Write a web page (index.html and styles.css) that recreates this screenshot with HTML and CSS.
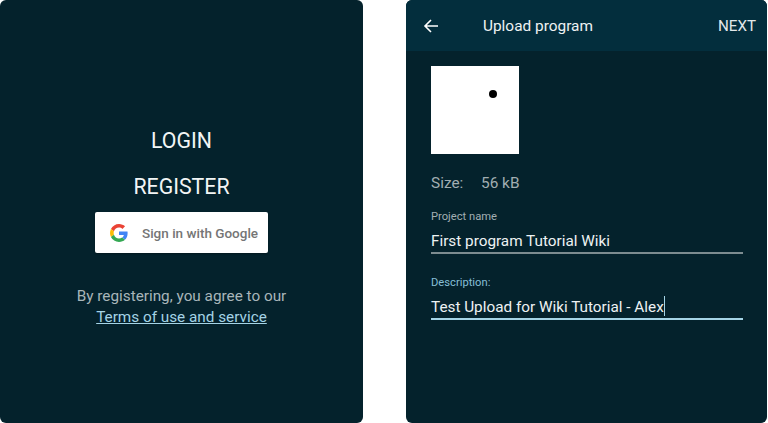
FILE: index.html
```html
<!DOCTYPE html>
<html lang="en">
<head>
  <meta charset="UTF-8">
  <meta name="viewport" content="width=device-width, initial-scale=1.0">
  <title>Upload program</title>
  <link rel="stylesheet" href="styles.css">
</head>
<body>
  <div class="screen login">
    <div class="login-link first">LOGIN</div>
    <div class="login-link">REGISTER</div>
    <div class="google-btn">
      <svg class="google-icon" viewBox="0 0 48 48" width="18" height="18">
        <path fill="#EA4335" d="M24 9.5c3.54 0 6.71 1.22 9.21 3.6l6.85-6.85C35.9 2.38 30.47 0 24 0 14.62 0 6.51 5.38 2.56 13.22l7.98 6.19C12.43 13.72 17.74 9.5 24 9.5z"/>
        <path fill="#4285F4" d="M46.98 24.55c0-1.57-.15-3.09-.38-4.55H24v9.02h12.94c-.58 2.96-2.26 5.48-4.78 7.18l7.73 6c4.51-4.18 7.09-10.36 7.09-17.65z"/>
        <path fill="#FBBC05" d="M10.53 28.59c-.48-1.45-.76-2.99-.76-4.59s.27-3.14.76-4.59l-7.98-6.19C.92 16.46 0 20.12 0 24c0 3.88.92 7.54 2.56 10.78l7.97-6.19z"/>
        <path fill="#34A853" d="M24 48c6.48 0 11.93-2.13 15.89-5.81l-7.73-6c-2.15 1.45-4.92 2.3-8.16 2.3-6.26 0-11.57-4.22-13.47-9.91l-7.98 6.19C6.51 42.62 14.62 48 24 48z"/>
      </svg>
      <span class="google-text">Sign in with Google</span>
    </div>
    <div class="terms">
      <div>By registering, you agree to our</div>
      <div class="terms-link">Terms of use and service</div>
    </div>
  </div>

  <div class="screen upload">
    <div class="topbar">
      <svg class="back" viewBox="0 0 16 16" width="16" height="16">
        <path d="M15 8H2M8 2L2 8l6 6" fill="none" stroke="#fff" stroke-width="1.6"/>
      </svg>
      <div class="topbar-title">Upload program</div>
      <div class="topbar-next">NEXT</div>
    </div>
    <div class="content">
      <div class="thumb"><span class="thumb-dot"></span></div>
      <div class="size"><span class="size-label">Size:</span><span>56 kB</span></div>
      <div class="field">
        <div class="field-label">Project name</div>
        <div class="field-value">First program Tutorial Wiki</div>
      </div>
      <div class="field focused">
        <div class="field-label">Description:</div>
        <div class="field-value">Test Upload for Wiki Tutorial - Alex<span class="caret"></span></div>
      </div>
    </div>
  </div>
</body>
</html>
```

FILE: styles.css
```css
body {
  margin: 0;
  height: 423px;
  overflow: hidden;
  background: #fff;
  display: flex;
  font-family: Roboto, "Liberation Sans", sans-serif;
  color: #fff;
}
.screen {
  height: 423px;
  background-color: #04222c;
  border-radius: 6px;
}
.login {
  width: 363px;
  margin-right: 43px;
  display: flex;
  flex-direction: column;
  align-items: center;
  padding-top: 129px;
  box-sizing: border-box;
}
.login-link {
  font-size: 21.3px;
  line-height: 24px;
  color: #f2f5f5;
  margin-bottom: 22px;
}
.login-link:nth-child(2) {
  margin-bottom: 13px;
}
.google-btn {
  width: 173px;
  height: 41px;
  background: #fff;
  border-radius: 2px;
  display: flex;
  align-items: center;
  box-shadow: 0 1px 2px rgba(0, 0, 0, 0.3);
}
.google-icon {
  margin-left: 15px;
}
.google-text {
  margin-left: 14px;
  font-size: 13.5px;
  font-weight: 500;
  color: #757575;
  white-space: nowrap;
}
.terms {
  margin-top: 33px;
  text-align: center;
  font-size: 15.3px;
  line-height: 21px;
  color: #a9b6ba;
}
.terms-link {
  color: #a5d4e6;
  text-decoration: underline;
}
.upload {
  width: 361px;
  overflow: hidden;
}
.topbar {
  height: 51px;
  background-color: #032e3d;
  display: flex;
  align-items: center;
  padding: 0 11px 0 17px;
}
.back {
  margin-right: 44px;
}
.topbar-title {
  font-size: 15.4px;
  flex: 1;
  padding-top: 1px;
  color: #eef2f3;
}
.topbar-next {
  font-size: 15.2px;
  padding-top: 1px;
  color: #e3e8ea;
}
.content {
  padding: 15px 24px 0 25px;
}
.thumb {
  width: 88px;
  height: 88px;
  background: #fff;
  position: relative;
}
.thumb-dot {
  position: absolute;
  left: 58px;
  top: 24px;
  width: 8px;
  height: 8px;
  border-radius: 50%;
  background: #000;
}
.size {
  margin-top: 20px;
  font-size: 15.4px;
  line-height: 18px;
  color: #a2aeb2;
  display: flex;
}
.size-label {
  width: 50px;
}
.field {
  margin-top: 18px;
  border-bottom: 2px solid #7d8c90;
  height: 42px;
}
.field + .field {
  margin-top: 22px;
}
.field-label {
  font-size: 11.2px;
  line-height: 14px;
  color: #a2aeb2;
}
.field-value {
  margin-top: 7px;
  font-size: 15.3px;
  line-height: 20px;
  color: #eef2f3;
}
.focused {
  border-bottom-color: #a5d4e6;
}
.focused .field-value {
  margin-top: 6px;
}
.focused .field-label {
  color: #86bfd6;
}
.caret {
  display: inline-block;
  width: 1.5px;
  height: 20px;
  background: #a5d4e6;
  vertical-align: -4px;
}
```
